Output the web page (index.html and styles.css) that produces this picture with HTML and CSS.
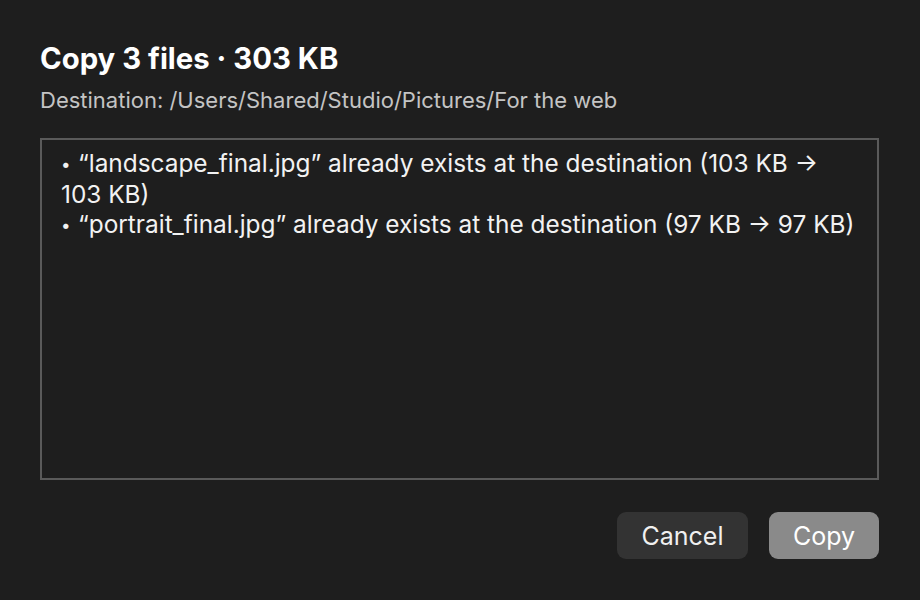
FILE: index.html
```html
<!DOCTYPE html>
<html lang="en">
<head>
<meta charset="utf-8">
<title>Copy files</title>
<link rel="stylesheet" href="styles.css">
</head>
<body>
<div class="dialog">
  <h1 class="title">Copy 3 files · 303 KB</h1>
  <p class="dest">Destination: /Users/Shared/Studio/Pictures/For the web</p>
  <div class="box">
    <ul class="list">
      <li>“landscape_final.jpg” already exists at the destination (103 KB → 103 KB)</li>
      <li>“portrait_final.jpg” already exists at the destination (97 KB → 97 KB)</li>
    </ul>
  </div>
  <div class="actions">
    <button class="btn btn-cancel">Cancel</button>
    <button class="btn btn-copy">Copy</button>
  </div>
</div>
</body>
</html>
```
FILE: styles.css
```css
html, body {
  margin: 0;
  padding: 0;
  background: #1e1e1e;
  width: 920px;
  height: 600px;
  overflow: hidden;
}
body {
  font-family: Inter, "Noto Sans", sans-serif;
  color: #f2f2f2;
}
.dialog {
  padding: 42px 41px 0 40px;
  display: flex;
  flex-direction: column;
}
.title {
  margin: 0;
  font-size: 29.3px;
  line-height: 34px;
  font-weight: 700;
  color: #ffffff;
}
.dest {
  margin: 11px 0 0 0;
  font-size: 22px;
  line-height: 26px;
  color: #c4c4c4;
}
.box {
  margin-top: 25px;
  height: 342px;
  border: 2px solid #5a5a5a;
  padding: 8px 20px 8px 19px;
  box-sizing: border-box;
}
.list {
  margin: 0;
  padding: 0;
  list-style: none;
  font-size: 24.4px;
  line-height: 30px;
}
.list li::before {
  content: "•";
  display: inline-block;
  width: 17px;
  font-size: 17px;
  vertical-align: 2px;
}
.actions {
  margin-top: 32px;
  display: flex;
  justify-content: flex-end;
  gap: 21px;
}
.btn {
  font-family: inherit;
  font-size: 25px;
  height: 47px;
  border: none;
  border-radius: 9px;
  color: #f0f0f0;
  padding: 0;
}
.btn-cancel {
  width: 131px;
  background: #333333;
}
.btn-copy {
  width: 110px;
  background: #8a8a8a;
  color: #ffffff;
}
```
